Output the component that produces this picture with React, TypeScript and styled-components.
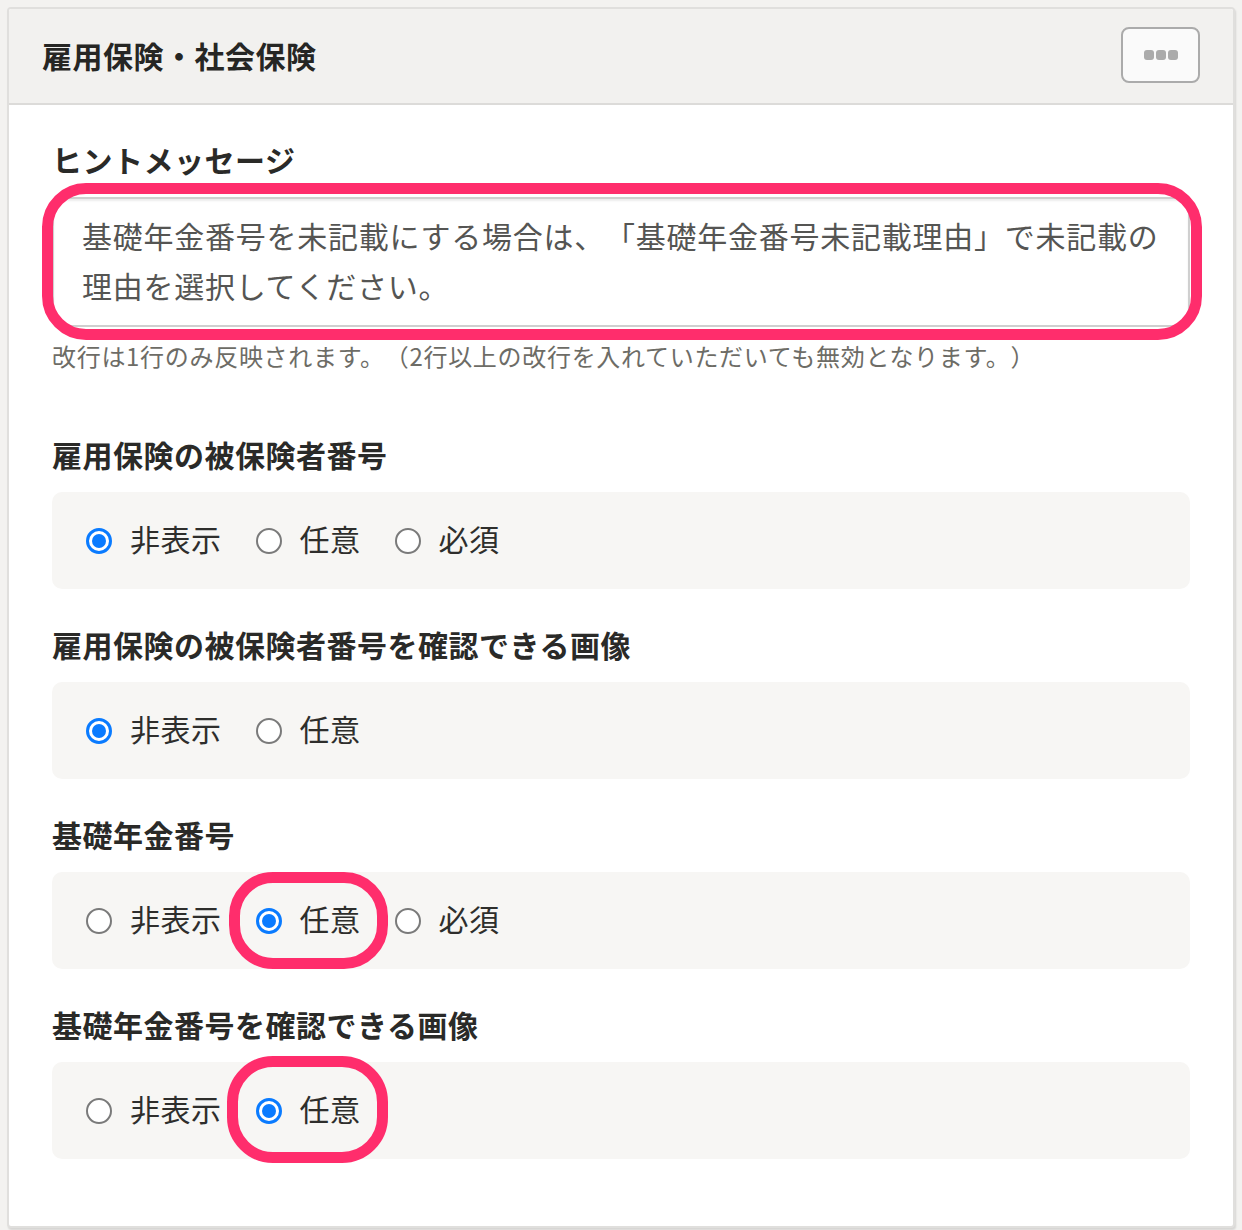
import React from 'react';
import styled, { createGlobalStyle } from 'styled-components';

const pink = '#ff2d6c';
const blue = '#0a7bff';
const jp = '"Noto Sans CJK JP", "Noto Sans", sans-serif';

const GlobalStyle = createGlobalStyle`
  html, body {
    margin: 0;
    padding: 0;
    background: #f3f2f0;
    font-family: ${jp};
    text-spacing-trim: space-all;
  }
  #root {
    padding: 7px;
  }
`;

const Card = styled.div`
  width: 1228px;
  box-sizing: border-box;
  background: #ffffff;
  border: 2px solid #e0dfdd;
  border-radius: 4px;
  box-shadow: 1px 2px 2px rgba(0, 0, 0, 0.12);
  overflow: hidden;
`;

const Header = styled.div`
  height: 94px;
  display: flex;
  align-items: center;
  justify-content: space-between;
  padding: 0 33px 0 33px;
  background: #f2f1ef;
  border-bottom: 2px solid #dcdbd9;
`;

const Title = styled.h2`
  margin: 0;
  margin-top: -3px;
  font-size: 30px;
  font-weight: 700;
  color: #262624;
  letter-spacing: 0.5px;
`;

const MenuButton = styled.button`
  width: 79px;
  height: 56px;
  margin-top: -2px;
  display: flex;
  align-items: center;
  justify-content: center;
  gap: 2px;
  background: #fafafa;
  border: 2px solid #ababab;
  border-radius: 8px;
  padding: 0;
`;

const Dot = styled.span`
  width: 10px;
  height: 10px;
  border-radius: 3px;
  background: #ababab;
`;

const Body = styled.div`
  padding: 33px 43px 67px 43px;
  display: flex;
  flex-direction: column;
`;

const Label = styled.div<{ $top?: number }>`
  margin-top: ${(p) => p.$top ?? 0}px;
  font-size: 30px;
  line-height: 42px;
  font-weight: 700;
  color: #2a2a28;
  letter-spacing: 0.5px;
`;

const FieldWrap = styled.div`
  position: relative;
  margin-top: 17px;
`;

const HintArea = styled.textarea`
  display: block;
  width: 100%;
  height: 130px;
  box-sizing: border-box;
  padding: 11px 28px 12px 28px;
  font-family: ${jp};
  font-size: 30px;
  line-height: 50px;
  letter-spacing: 0.75px;
  color: #555553;
  border: 2px solid #cfcfcf;
  border-radius: 6px;
  box-shadow: inset 0 2px 2px rgba(0, 0, 0, 0.08);
  resize: vertical;
  outline: none;
  text-spacing-trim: space-all;
`;

const Mark = styled.span<{ $l: number; $t: number; $r: number; $b: number; $radius: number }>`
  position: absolute;
  left: ${(p) => p.$l}px;
  top: ${(p) => p.$t}px;
  right: ${(p) => p.$r}px;
  bottom: ${(p) => p.$b}px;
  border: 11px solid ${pink};
  border-radius: ${(p) => p.$radius}px;
  pointer-events: none;
`;

const Help = styled.p`
  margin: 11px 0 0 0;
  font-size: 24px;
  line-height: 36px;
  letter-spacing: 0.7px;
  color: #6d6c66;
`;

const OptionBox = styled.div`
  margin-top: 17px;
  height: 97px;
  display: flex;
  align-items: center;
  gap: 34px;
  padding-left: 34px;
  background: #f7f6f4;
  border-radius: 10px;
`;

const Option = styled.label`
  position: relative;
  display: flex;
  align-items: center;
  gap: 18px;
  font-size: 30px;
  line-height: 42px;
  letter-spacing: 0.5px;
  color: #2e2e2c;
`;

const OptionText = styled.span`
  padding-bottom: 5px;
`;

const Radio = styled.span<{ $on: boolean }>`
  width: 26px;
  height: 26px;
  box-sizing: border-box;
  border-radius: 50%;
  background: #ffffff;
  border: ${(p) => (p.$on ? `3px solid ${blue}` : '2px solid #7a7a7a')};
  display: flex;
  align-items: center;
  justify-content: center;
  &::after {
    content: '';
    display: ${(p) => (p.$on ? 'block' : 'none')};
    width: 14px;
    height: 14px;
    border-radius: 50%;
    background: ${blue};
  }
`;

type Sec = {
  label: string;
  options: string[];
  selected: number;
  marked?: { l: number; t: number; r: number; b: number; radius: number };
};

const sections: Sec[] = [
  { label: '雇用保険の被保険者番号', options: ['非表示', '任意', '必須'], selected: 0 },
  { label: '雇用保険の被保険者番号を確認できる画像', options: ['非表示', '任意'], selected: 0 },
  {
    label: '基礎年金番号',
    options: ['非表示', '任意', '必須'],
    selected: 1,
    marked: { l: -27, t: -25, r: -27, b: -25, radius: 44 },
  },
  {
    label: '基礎年金番号を確認できる画像',
    options: ['非表示', '任意'],
    selected: 1,
    marked: { l: -29, t: -31, r: -27, b: -29, radius: 46 },
  },
];

export default function App() {
  return (
    <>
      <GlobalStyle />
      <Card>
        <Header>
          <Title>雇用保険・社会保険</Title>
          <MenuButton aria-label="menu">
            <Dot />
            <Dot />
            <Dot />
          </MenuButton>
        </Header>
        <Body>
          <Label>ヒントメッセージ</Label>
          <FieldWrap>
            <HintArea
              readOnly
              defaultValue={
                '基礎年金番号を未記載にする場合は、「基礎年金番号未記載理由」で未記載の理由を選択してください。'
              }
            />
            <Mark $l={-10} $t={-14} $r={-12} $b={-13} $radius={44} />
          </FieldWrap>
          <Help>改行は1行のみ反映されます。（2行以上の改行を入れていただいても無効となります。）</Help>

          {sections.map((s, i) => (
            <React.Fragment key={s.label}>
              <Label $top={i === 0 ? 59 : 34}>{s.label}</Label>
              <OptionBox>
                {s.options.map((o, j) => (
                  <Option key={o}>
                    <Radio $on={j === s.selected} />
                    <OptionText>{o}</OptionText>
                    {s.marked && j === s.selected && (
                      <Mark
                        $l={s.marked.l}
                        $t={s.marked.t}
                        $r={s.marked.r}
                        $b={s.marked.b}
                        $radius={s.marked.radius}
                      />
                    )}
                  </Option>
                ))}
              </OptionBox>
            </React.Fragment>
          ))}
        </Body>
      </Card>
    </>
  );
}
